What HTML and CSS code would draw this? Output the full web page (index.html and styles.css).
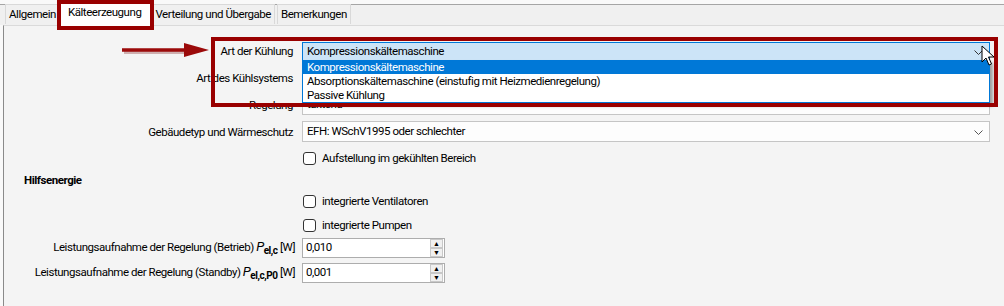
FILE: index.html
```html
<!DOCTYPE html>
<html lang="de">
<head>
    <meta charset="UTF-8">
    <title>Kälteerzeugung</title>
    <link rel="stylesheet" href="styles.css">
</head>
<body>
    <!-- Reiter -->
    <div class="tabstrip">
        <div class="tab">Allgemein</div>
        <div class="tab active">Kälteerzeugung</div>
        <div class="tab">Verteilung und Übergabe</div>
        <div class="tab">Bemerkungen</div>
    </div>

    <!-- Inhalt des Reiters -->
    <div class="panel">
        <div class="row">
            <label>Art der Kühlung</label>
            <div class="combo open">
                <span>Kompressionskältemaschine</span>
                <svg class="chev" width="9" height="5" viewBox="0 0 9 5"><path d="M0.5 0.5 L4.5 4.5 L8.5 0.5" fill="none" stroke="#333" stroke-width="1"/></svg>
                <ul class="droplist">
                    <li class="sel">Kompressionskältemaschine</li>
                    <li>Absorptionskältemaschine (einstufig mit Heizmedienregelung)</li>
                    <li>Passive Kühlung</li>
                </ul>
            </div>
        </div>
        <div class="row">
            <label>Art des Kühlsystems</label>
            <div class="combo"><span>Kaltwasser</span></div>
        </div>
        <div class="row">
            <label>Regelung</label>
            <div class="combo"><span>taktend</span></div>
        </div>
        <div class="row">
            <label>Gebäudetyp und Wärmeschutz</label>
            <div class="combo">
                <span>EFH: WSchV1995 oder schlechter</span>
                <svg class="chev" width="9" height="5" viewBox="0 0 9 5"><path d="M0.5 0.5 L4.5 4.5 L8.5 0.5" fill="none" stroke="#555" stroke-width="1"/></svg>
            </div>
        </div>
        <div class="row check-row first-check">
            <span></span>
            <div class="check"><span class="box"></span>Aufstellung im gekühlten Bereich</div>
        </div>

        <h3>Hilfsenergie</h3>

        <div class="row check-row">
            <span></span>
            <div class="check"><span class="box"></span>integrierte Ventilatoren</div>
        </div>
        <div class="row check-row last-check">
            <span></span>
            <div class="check"><span class="box"></span>integrierte Pumpen</div>
        </div>
        <div class="row num-row">
            <label>Leistungsaufnahme der Regelung (Betrieb) <i>P</i><sub>el,c</sub> [W]</label>
            <div class="num">
                <span>0,010</span>
                <div class="spin"><b>&#9650;</b><b>&#9660;</b></div>
            </div>
        </div>
        <div class="row num-row">
            <label>Leistungsaufnahme der Regelung (Standby) <i>P</i><sub>el,c,P0</sub> [W]</label>
            <div class="num">
                <span>0,001</span>
                <div class="spin"><b>&#9650;</b><b>&#9660;</b></div>
            </div>
        </div>
    </div>

    <!-- Markierungen -->
    <div class="mark mark-tab"></div>
    <div class="mark mark-combo"></div>
    <svg class="arrow" width="92" height="20" viewBox="0 0 92 20">
        <path d="M2 11 H70" stroke="#7a1010" stroke-opacity="0.3" stroke-width="4"/>
        <path d="M0 9 H68" stroke="#9b0a0a" stroke-width="3.5"/>
        <path d="M62 2 L87 9 L62 16 Z" fill="#9b0a0a"/>
    </svg>
    <svg class="cursor" width="14" height="22" viewBox="0 0 14 22">
        <path d="M1 1 V17 L5 13 L8 20 L10.5 19 L7.5 12 L13 12 Z" fill="#fff" stroke="#000" stroke-width="1" stroke-linejoin="round"/>
    </svg>
</body>
</html>
```

FILE: styles.css
```css
/* Grundlayout */
body {
    margin: 0;
    background-color: #f9f9f9;
    font-family: Roboto, "Liberation Sans", sans-serif;
    font-size: 11.5px;
    letter-spacing: -0.45px;
    color: #000;
    height: 306px;
    overflow: hidden;
    position: relative;
}

.tabstrip {
    display: flex;
    margin-top: 4px;
    padding-left: 5px;
    border-top: 1px solid #a5a5a5;
    height: 20px;
    background-color: #f0f0f0;
}

.tab {
    height: 19px;
    line-height: 19px;
    padding: 0 3px;
    border: 1px solid #d9d9d9;
    border-bottom: none;
    background-color: #f0f0f0;
    margin-top: -1px;
}

.tab:last-child {
    margin-left: 2px;
}

.tab.active {
    background-color: #fff;
    margin: -3px 0 0 -2px;
    height: 23px;
    padding: 0 9px;
    position: relative;
    z-index: 1;
}

.panel {
    margin-left: 3px;
    border-left: 1px solid #8a8a8a;
    border-top: 1px solid #dadada;
    background-color: #f4f4f4;
    height: 266px;
    padding-top: 14px;
}

.row {
    display: grid;
    grid-template-columns: 289px 688px;
    column-gap: 9px;
    align-items: center;
    height: 21px;
    margin-bottom: 6px;
}

.row label {
    text-align: right;
    white-space: nowrap;
}

.combo {
    position: relative;
    height: 19px;
    line-height: 19px;
    border: 1px solid #c5c5c5;
    background-color: #fdfdfd;
    padding-left: 4px;
}

.combo.open {
    height: 17px;
    line-height: 17px;
    margin-top: 1px;
    border-color: #0078d7;
    background-color: #cce4f7;
}

.chev {
    position: absolute;
    right: 6px;
    top: 8px;
}

.combo.open .chev {
    top: 7px;
}

.droplist {
    position: absolute;
    left: -1px;
    right: -1px;
    top: 17px;
    margin: 0;
    padding: 0;
    list-style: none;
    background-color: #fff;
    border: 1px solid #0078d7;
    border-top: none;
    box-shadow: 3px 3px 3px rgba(0, 0, 0, 0.35);
    z-index: 2;
}

.droplist li {
    height: 14px;
    line-height: 14px;
    padding-left: 4px;
}

.droplist li.sel {
    background-color: #0078d7;
    color: #fff;
}

/* Checkboxen */
.check-row {
    height: 18px;
}

.first-check {
    margin-top: 7px;
    margin-bottom: 6px;
}

.last-check {
    margin-bottom: 4px;
}

.check {
    display: flex;
    align-items: center;
    gap: 6px;
    padding-left: 1px;
}

.box {
    width: 11px;
    height: 11px;
    border: 1px solid #333;
    border-radius: 3px;
    background-color: #fff;
}

h3 {
    margin: 0 0 5px 20px;
    font-size: 11.5px;
    font-weight: bold;
    height: 14px;
    line-height: 14px;
}

/* Zahlenfelder */
.num-row {
    grid-template-columns: 289px 143px;
    height: 20px;
    margin-bottom: 5px;
}

.num-row label {
    margin-right: -2px;
}

.num-row i {
    font-style: italic;
    font-size: 13px;
}

.num-row sub {
    font-weight: bold;
    font-size: 10px;
}

.num {
    position: relative;
    height: 18px;
    line-height: 17px;
    border: 1px solid #adadad;
    background-color: #fff;
    padding-left: 3px;
}

.spin {
    position: absolute;
    right: 1px;
    top: 0;
    width: 13px;
    display: flex;
    flex-direction: column;
}

.spin b {
    height: 7px;
    line-height: 8px;
    font-size: 7px;
    letter-spacing: 0;
    text-align: center;
    border: 1px solid #c8c8c8;
    background-color: #f0f0f0;
    font-weight: normal;
}

/* Rote Markierungen */
.mark {
    position: absolute;
    border: 4px solid #990000;
    z-index: 3;
}

.mark-tab {
    left: 57px;
    top: 0;
    width: 89px;
    height: 22px;
}

.mark-combo {
    left: 211px;
    top: 37px;
    width: 779px;
    height: 62px;
}

.arrow {
    position: absolute;
    left: 122px;
    top: 41px;
    z-index: 3;
}

.cursor {
    position: absolute;
    left: 981px;
    top: 45px;
    z-index: 4;
}
```
